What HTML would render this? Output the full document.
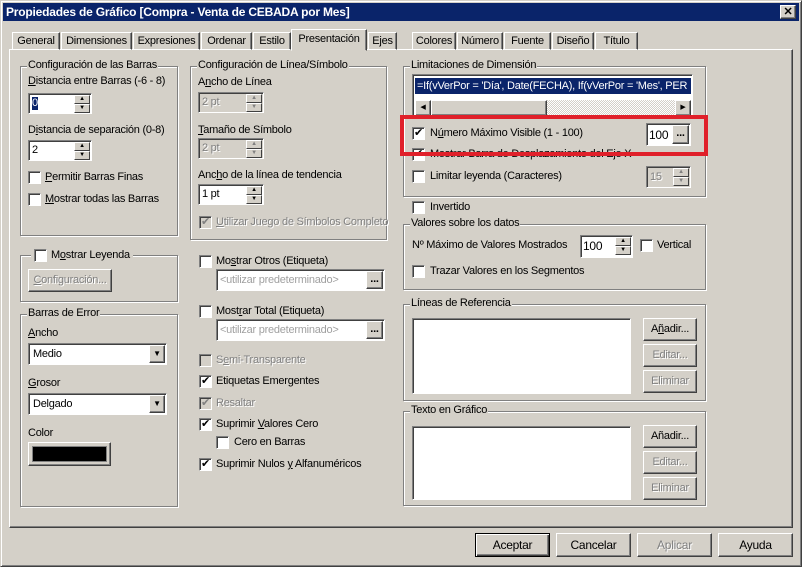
<!DOCTYPE html>
<html><head><meta charset="utf-8"><style>
*{margin:0;padding:0;box-sizing:border-box}
body{width:802px;height:567px;background:#d4d0c8;position:relative;overflow:hidden;font:11px "Liberation Sans",sans-serif;color:#000;letter-spacing:-0.25px}
div,span{position:absolute}
.t{white-space:nowrap;line-height:13px}
.d{color:#808080;text-shadow:1px 1px 0 #fff}
.grp{border:1px solid #808080;box-shadow:1px 1px 0 #fff,inset 1px 1px 0 #fff}
.gl{top:-8px;left:6px;background:#d4d0c8;padding:0 1px;white-space:nowrap;line-height:13px}
.btn{border:1px solid;border-color:#fff #404040 #404040 #fff;box-shadow:inset -1px -1px #808080;text-align:center;white-space:nowrap}
.sunk{border:1px solid;border-color:#808080 #fff #fff #808080;box-shadow:inset 1px 1px #404040;background:#fff}
.cb{width:13px;height:13px;border:1px solid;border-color:#808080 #fff #fff #808080;box-shadow:inset 1px 1px #404040;background:#fff;font-size:11px;line-height:11px;text-align:center}
.tab{top:32px;height:18px;border:1px solid;border-color:#fff #404040 transparent #fff;box-shadow:inset -1px 0 #808080;padding:2px 0 0;text-align:center;white-space:nowrap;line-height:13px}
.sp{width:16px;height:18px;right:1px;top:1px;background:#d4d0c8}
.sp i{position:absolute;left:0;width:16px;height:9px;border:1px solid;border-color:#fff #404040 #404040 #fff;font-style:normal;font-size:6px;line-height:7px;text-align:center}
</style></head><body>
<div style="left:0;top:0;width:802px;height:567px;border:1px solid;border-color:#d4d0c8 #404040 #404040 #d4d0c8;box-shadow:inset 1px 1px #fff,inset -1px -1px #808080"></div>
<div style="left:3px;top:3px;width:796px;height:18px;background:#0a246a"></div>
<div class="t" style="left:6px;top:5px;color:#fff;font-weight:bold;font-size:12px;line-height:14px;letter-spacing:-0.2px">Propiedades de Gráfico [Compra - Venta de CEBADA por Mes]</div>
<div class="btn" style="left:780px;top:5px;width:16px;height:14px;background:#d4d0c8;font-weight:bold;font-size:11px;line-height:12px">✕</div>

<div style="left:9px;top:49px;width:784px;height:479px;border:1px solid;border-color:#fff #404040 #404040 #fff;box-shadow:inset -1px -1px #808080"></div>
<div class="tab" style="left:12px;width:48px">General</div>
<div class="tab" style="left:61px;width:71px">Dimensiones</div>
<div class="tab" style="left:133px;width:67px">Expresiones</div>
<div class="tab" style="left:201px;width:51px">Ordenar</div>
<div class="tab" style="left:253px;width:38px">Estilo</div>
<div class="tab" style="left:291px;top:29px;height:22px;width:76px;background:#d4d0c8;padding-top:3px">Presentación</div>
<div class="tab" style="left:368px;width:29px">Ejes</div>
<div class="tab" style="left:412px;width:44px">Colores</div>
<div class="tab" style="left:457px;width:46px">Número</div>
<div class="tab" style="left:504px;width:47px">Fuente</div>
<div class="tab" style="left:552px;width:42px">Diseño</div>
<div class="tab" style="left:595px;width:43px">Título</div>

<div class="grp" style="left:20px;top:66px;width:158px;height:170px"><span class="gl">Configuración de las Barras</span></div>
<div class="t" style="left:28px;top:75px"><u>D</u>istancia entre Barras (-6 - 8)</div>
<div class="sunk" style="left:28px;top:93px;width:64px;height:21px"><span style="left:3px;top:3px;background:#0a246a;color:#fff;line-height:13px">0</span><div class="sp"><i style="top:0">▲</i><i style="top:9px">▼</i></div></div>
<div class="t" style="left:28px;top:124px">D<u>i</u>stancia de separación (0-8)</div>
<div class="sunk" style="left:28px;top:140px;width:64px;height:21px"><span style="left:3px;top:3px">2</span><div class="sp"><i style="top:0">▲</i><i style="top:9px">▼</i></div></div>
<div class="cb" style="left:28px;top:171px"></div><div class="t" style="left:45px;top:171px"><u>P</u>ermitir Barras Finas</div>
<div class="cb" style="left:28px;top:193px"></div><div class="t" style="left:45px;top:193px"><u>M</u>ostrar todas las Barras</div>

<div class="grp" style="left:20px;top:255px;width:158px;height:47px"></div>
<div style="left:31px;top:248px;width:102px;height:14px;background:#d4d0c8"></div>
<div class="cb" style="left:34px;top:249px"></div><div class="t" style="left:51px;top:249px">M<u>o</u>strar Leyenda</div>
<div class="btn d" style="left:28px;top:269px;width:84px;height:23px;line-height:20px"><u>C</u>onfiguración...</div>

<div class="grp" style="left:20px;top:314px;width:158px;height:193px"><span class="gl">Barras de Error</span></div>
<div class="t" style="left:28px;top:327px"><u>A</u>ncho</div>
<div class="sunk" style="left:28px;top:343px;width:139px;height:22px"><span style="left:4px;top:4px">Medio</span><div class="btn" style="right:1px;top:1px;width:16px;height:18px;background:#d4d0c8;font-size:8px;line-height:16px">▼</div></div>
<div class="t" style="left:28px;top:377px"><u>G</u>rosor</div>
<div class="sunk" style="left:28px;top:393px;width:139px;height:22px"><span style="left:4px;top:4px">Delgado</span><div class="btn" style="right:1px;top:1px;width:16px;height:18px;background:#d4d0c8;font-size:8px;line-height:16px">▼</div></div>
<div class="t" style="left:28px;top:427px">Color</div>
<div class="btn" style="left:28px;top:442px;width:83px;height:24px;background:#d4d0c8"><span style="left:3px;top:3px;width:75px;height:16px;background:#000;border:1px solid #808080"></span></div>

<div class="grp" style="left:190px;top:66px;width:197px;height:174px"><span class="gl">Configuración de Línea/Símbolo</span></div>
<div class="t" style="left:198px;top:76px">A<u>n</u>cho de Línea</div>
<div class="sunk" style="left:198px;top:92px;width:66px;height:21px;background:#d4d0c8"><span class="d" style="left:3px;top:3px">2 pt</span><div class="sp"><i style="top:0;color:#808080">▲</i><i style="top:9px;color:#808080">▼</i></div></div>
<div class="t" style="left:198px;top:124px"><u>T</u>amaño de Símbolo</div>
<div class="sunk" style="left:198px;top:138px;width:66px;height:21px;background:#d4d0c8"><span class="d" style="left:3px;top:3px">2 pt</span><div class="sp"><i style="top:0;color:#808080">▲</i><i style="top:9px;color:#808080">▼</i></div></div>
<div class="t" style="left:198px;top:169px">Anc<u>h</u>o de la línea de tendencia</div>
<div class="sunk" style="left:198px;top:184px;width:66px;height:21px"><span style="left:3px;top:3px">1 pt</span><div class="sp"><i style="top:0">▲</i><i style="top:9px">▼</i></div></div>
<div class="cb" style="left:199px;top:216px;background:#d4d0c8;color:#808080">✔</div><div class="t d" style="left:216px;top:216px"><u>U</u>tilizar Juego de Símbolos Completo</div>

<div class="cb" style="left:199px;top:255px"></div><div class="t" style="left:216px;top:255px">Mo<u>s</u>trar Otros (Etiqueta)</div>
<div class="sunk" style="left:216px;top:269px;width:169px;height:22px;background:#fff"><span style="left:3px;top:4px;color:#a0a0a0">&lt;utilizar predeterminado&gt;</span><div class="btn" style="right:1px;top:1px;width:17px;height:18px;background:#d4d0c8;font-weight:bold;line-height:14px">...</div></div>
<div class="cb" style="left:199px;top:305px"></div><div class="t" style="left:216px;top:305px">Most<u>r</u>ar Total (Etiqueta)</div>
<div class="sunk" style="left:216px;top:319px;width:169px;height:22px;background:#fff"><span style="left:3px;top:4px;color:#a0a0a0">&lt;utilizar predeterminado&gt;</span><div class="btn" style="right:1px;top:1px;width:17px;height:18px;background:#d4d0c8;font-weight:bold;line-height:14px">...</div></div>
<div class="cb" style="left:199px;top:354px;background:#d4d0c8"></div><div class="t d" style="left:216px;top:354px">S<u>e</u>mi-Transparente</div>
<div class="cb" style="left:199px;top:375px">✔</div><div class="t" style="left:216px;top:375px">Etiquetas Emergentes</div>
<div class="cb" style="left:199px;top:397px;background:#d4d0c8;color:#808080">✔</div><div class="t d" style="left:216px;top:397px">Resaltar</div>
<div class="cb" style="left:199px;top:418px">✔</div><div class="t" style="left:216px;top:418px">Suprimir <u>V</u>alores Cero</div>
<div class="cb" style="left:216px;top:436px"></div><div class="t" style="left:234px;top:436px">Cero en Barras</div>
<div class="cb" style="left:199px;top:458px">✔</div><div class="t" style="left:216px;top:458px">Suprimir Nulos <u>y</u> Alfanuméricos</div>

<div class="grp" style="left:403px;top:66px;width:303px;height:131px"><span class="gl">Limitaciones de Dimensión</span></div>
<div class="sunk" style="left:412px;top:74px;width:281px;height:44px"><span style="left:2px;top:3px;width:276px;height:16px;background:#0a246a;color:#fff;padding:2px 0 0 2px;white-space:nowrap;overflow:hidden">=If(vVerPor = 'Día', Date(FECHA), If(vVerPor = 'Mes', PER</span>
<div style="left:2px;top:25px;width:276px;height:16px;background:repeating-conic-gradient(#fff 0 25%,#d4d0c8 0 50%) 0 0/2px 2px"></div>
<div class="btn" style="left:2px;top:25px;width:16px;height:16px;background:#d4d0c8;font-size:7px;line-height:14px">◀</div>
<div class="btn" style="left:18px;top:25px;width:116px;height:16px;background:#d4d0c8"></div>
<div class="btn" style="left:262px;top:25px;width:16px;height:16px;background:#d4d0c8;font-size:7px;line-height:14px">▶</div></div>
<div class="cb" style="left:412px;top:127px">✔</div><div class="t" style="left:430px;top:127px">N<u>ú</u>mero Máximo Visible (1 - 100)</div>
<div class="sunk" style="left:646px;top:123px;width:45px;height:23px"><span style="left:2px;top:4px;font-size:12px">100</span><div class="btn" style="right:1px;top:1px;width:17px;height:19px;background:#d4d0c8;font-weight:bold;line-height:14px">...</div></div>
<div class="cb" style="left:412px;top:148px">✔</div><div class="t" style="left:430px;top:148px">Mostrar Barra de Desplazamiento del Eje X</div>
<div class="cb" style="left:412px;top:170px"></div><div class="t" style="left:430px;top:170px">Limitar leyenda (Caracteres)</div>
<div class="sunk" style="left:646px;top:166px;width:45px;height:22px;background:#d4d0c8"><span class="d" style="left:3px;top:4px">15</span><div class="sp"><i style="top:0;color:#808080">▲</i><i style="top:9px;color:#808080">▼</i></div></div>
<div style="left:400px;top:115px;width:308px;height:41px;border:4px solid #e0202a"></div>

<div class="cb" style="left:412px;top:201px"></div><div class="t" style="left:430px;top:201px">Invertido</div>
<div class="grp" style="left:403px;top:224px;width:303px;height:66px"><span class="gl">Valores sobre los datos</span></div>
<div class="t" style="left:412px;top:239px">Nº Máximo de Valores Mostrados</div>
<div class="sunk" style="left:580px;top:235px;width:53px;height:23px"><span style="left:2px;top:3px;font-size:12px">100</span><div class="sp"><i style="top:0">▲</i><i style="top:9px">▼</i></div></div>
<div class="cb" style="left:640px;top:239px"></div><div class="t" style="left:657px;top:239px">Vertical</div>
<div class="cb" style="left:412px;top:265px"></div><div class="t" style="left:430px;top:265px">Trazar Valores en los Segmentos</div>

<div class="grp" style="left:403px;top:304px;width:303px;height:97px"><span class="gl">Líneas de Referencia</span></div>
<div class="sunk" style="left:412px;top:318px;width:219px;height:76px"></div>
<div class="btn" style="left:643px;top:318px;width:54px;height:23px;line-height:20px">A<u>ñ</u>adir...</div>
<div class="btn d" style="left:643px;top:344px;width:54px;height:23px;line-height:20px">Editar...</div>
<div class="btn d" style="left:643px;top:370px;width:54px;height:23px;line-height:20px">Eliminar</div>

<div class="grp" style="left:403px;top:411px;width:303px;height:95px"><span class="gl">Texto en Gráfico</span></div>
<div class="sunk" style="left:412px;top:426px;width:219px;height:74px"></div>
<div class="btn" style="left:643px;top:425px;width:54px;height:23px;line-height:20px">Añadir...</div>
<div class="btn d" style="left:643px;top:451px;width:54px;height:23px;line-height:20px">Editar...</div>
<div class="btn d" style="left:643px;top:477px;width:54px;height:23px;line-height:20px">Eliminar</div>

<div class="btn" style="left:475px;top:533px;width:75px;height:24px;border:1px solid #000;box-shadow:inset 1px 1px #fff,inset -1px -1px #404040,inset -2px -2px #808080;line-height:22px;font-size:12px">Aceptar</div>
<div class="btn" style="left:556px;top:533px;width:75px;height:24px;line-height:22px;font-size:12px">Cancelar</div>
<div class="btn d" style="left:637px;top:533px;width:75px;height:24px;line-height:22px;font-size:12px">Aplicar</div>
<div class="btn" style="left:718px;top:533px;width:75px;height:24px;line-height:22px;font-size:12px">Ayuda</div>
</body></html>
